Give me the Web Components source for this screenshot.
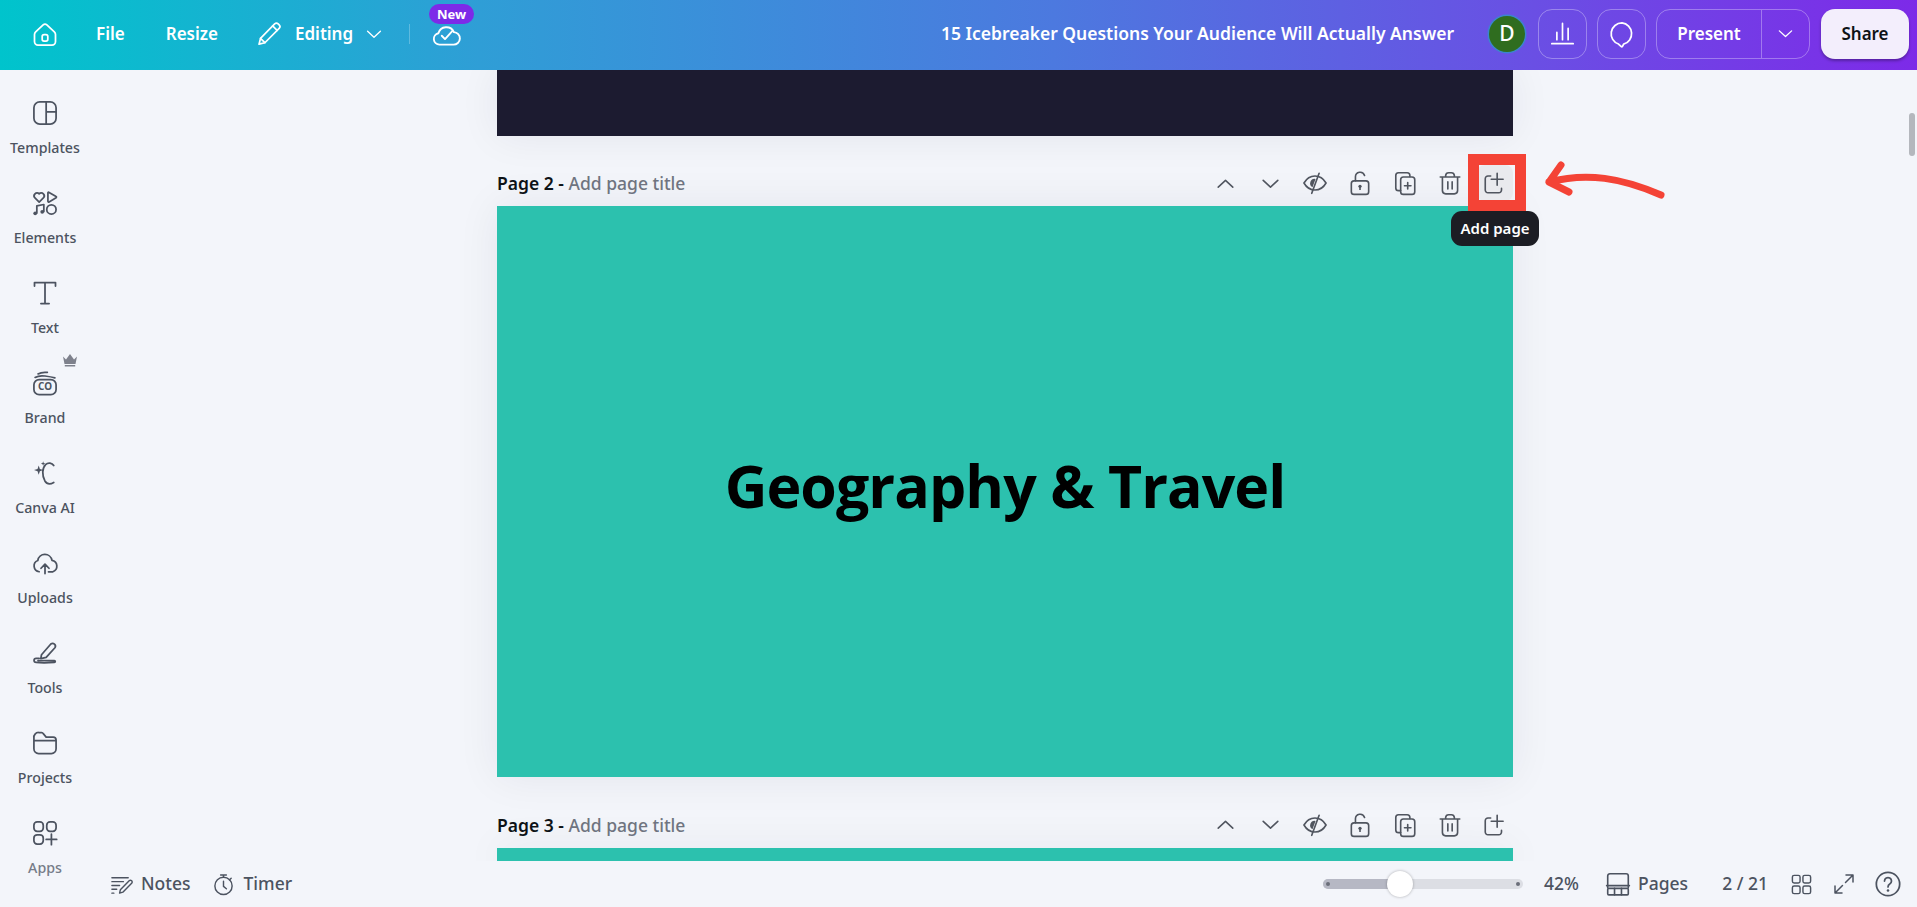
<!DOCTYPE html>
<html lang="en">
<head>
<meta charset="utf-8">
<title>Canva editor</title>
<style>
html,body{margin:0;padding:0;height:100%;overflow:hidden;background:#f3f5fa;font-family:"Noto Sans","Liberation Sans",sans-serif}
</style>
</head>
<body>
<cv-app>
  <cv-header slot="header"></cv-header>
  <cv-sidebar slot="sidebar">
    <cv-side-item icon="templates" label="Templates"></cv-side-item>
    <cv-side-item icon="elements" label="Elements"></cv-side-item>
    <cv-side-item icon="text" label="Text"></cv-side-item>
    <cv-side-item icon="brand" label="Brand" crown></cv-side-item>
    <cv-side-item icon="ai" label="Canva AI"></cv-side-item>
    <cv-side-item icon="uploads" label="Uploads"></cv-side-item>
    <cv-side-item icon="tools" label="Tools"></cv-side-item>
    <cv-side-item icon="projects" label="Projects"></cv-side-item>
    <cv-side-item icon="apps" label="Apps" dim></cv-side-item>
  </cv-sidebar>
  <cv-workspace slot="workspace">
    <cv-slide color="#1c1b30" height="66"></cv-slide>
    <cv-page-bar page="2" hover height="70"></cv-page-bar>
    <cv-slide color="#2cc1ae" height="571"><cv-heading>Geography &amp; Travel</cv-heading></cv-slide>
    <cv-page-bar page="3" height="71"></cv-page-bar>
    <cv-slide color="#2cc1ae" height="20"></cv-slide>
  </cv-workspace>
  <cv-footer slot="footer"></cv-footer>
  <cv-annotation slot="overlay"></cv-annotation>
</cv-app>

<script>
const S='fill="none" stroke="currentColor" stroke-width="1.5" stroke-linecap="round" stroke-linejoin="round"';
const ICONS={
 home:`<path ${S} d="M4 10.2 10.4 4.2a2.4 2.4 0 0 1 3.2 0L20 10.2c.6.6 1 1.4 1 2.2v6.1a3 3 0 0 1-3 3H6a3 3 0 0 1-3-3v-6.1c0-.8.4-1.6 1-2.2Z"/><rect ${S} x="9.6" y="12.6" width="4.8" height="5.6" rx="1.6"/>`,
 pencil:`<path ${S} d="M4 16.4 16.6 3.5a2.2 2.2 0 0 1 3.1 0l.9.9a2.2 2.2 0 0 1 0 3.1L7.9 20.2l-5.2 1.3L4 16.4Z"/><path ${S} d="m14.8 5.3 4 4M4 16.4l3.9 3.8"/>`,
 chevdown:`<path ${S} d="m5 9 7 6.5L19 9"/>`,
 chevup:`<path ${S} d="m5 15.5 7-6.5 7 6.500"/>`,
 cloud:`<path ${S} d="M6.8 20.5a4.6 4.6 0 0 1-.9-9.1 6.6 6.6 0 0 1 12.4-.9 5 5 0 0 1-.4 10H6.8Z"/><path ${S} d="m8.6 13.4 2.6 2.7 5.8-6.4"/>`,
 bars:`<path ${S} d="M2.500 21h19M7 17.500V11M12 17.500V3M17 17.500V7.500"/>`,
 comment:`<path ${S} d="M12 2.500a9.300 9.300 0 0 0-3 18.100l2.400 2.300c.3.300.8.200 1-.2l1-2A9.300 9.300 0 0 0 12 2.500Z"/>`,
 templates:`<rect ${S} x="2.5" y="2.5" width="19" height="19" rx="5"/><path ${S} d="M13 2.5v19M13 11h8.5"/>`,
 elements:`<path ${S} d="M7 11.2 3.4 7.7a2.6 2.6 0 0 1 0-3.6 2.5 2.5 0 0 1 3.6 0 2.5 2.5 0 0 1 3.6 0 2.6 2.6 0 0 1 0 3.6L7 11.2Z"/><path ${S} d="M14.5 3.4v7.2c0 .5.5.8 1 .5l6-3.6c.4-.3.4-.8 0-1l-6-3.6c-.5-.3-1 0-1 .5Z"/><circle ${S} cx="17.5" cy="17.5" r="4"/><path ${S} d="M5 20.5V14.5l6-1.2v6"/><circle cx="3.6" cy="20.8" r="1.6" fill="currentColor"/><circle cx="9.6" cy="19.6" r="1.6" fill="currentColor"/>`,
 text:`<path ${S} d="M3 6V3h18v3M12 3v18M8.5 21h7"/>`,
 brand:`<rect ${S} x="2.5" y="9" width="19" height="13" rx="4.5"/><path ${S} d="M3.5 7.2C6 5.8 9 5.6 12 6c3 .4 6 .9 8.5 1.6M6 4.2c2-1.2 5-1.6 8-1.3"/><text x="12" y="18.4" text-anchor="middle" font-family="Noto Sans,sans-serif" font-size="8.5" font-weight="700" fill="currentColor">CO</text>`,
 ai:`<path ${S} d="M19.5 5.6c-1.4-2.4-4.8-3-7-.8-3 3-3.2 9.4-.6 14 1.6 2.6 4.6 3 7.6 1.3"/><path d="M6.6 5.5l1 3 3 1-3 1-1 3-1-3-3-1 3-1Z" fill="currentColor"/><path d="M10.4 2l.5 1.4 1.4.5-1.4.5-.5 1.4-.5-1.4L8.500 3.900l1.400-.5Z" fill="currentColor"/>`,
 uploads:`<path ${S} d="M7 19.500a5 5 0 0 1-1.200-9.600 6.200 6.200 0 0 1 12.200-.2 5.100 5.100 0 0 1 .8 9.800H15"/><path ${S} d="M12 21V13.500M8.600 16.500 12 13l3.400 3.500"/>`,
 tools:`<path ${S} d="M9 13.500 17 4.300a2.400 2.400 0 0 1 3.500 3.200l-7.500 8.300-4.600 1Z"/><path ${S} d="M7 16.500H4.400a1.800 1.800 0 0 0 0 3.600c5 .6 10 .4 15.600 0a.8.8 0 0 0 0-1.600H6"/>`,
 projects:`<path ${S} d="M2.500 7.500v9.500a4 4 0 0 0 4 4h11a4 4 0 0 0 4-4V9.500a2.500 2.500 0 0 0-2.500-2.500h-6l-2.500-3a2 2 0 0 0-1.500-1H6.500a4 4 0 0 0-4 4.500ZM2.500 10h19"/>`,
 apps:`<rect ${S} x="2.500" y="2.500" width="8" height="8" rx="2.800"/><rect ${S} x="13.500" y="2.500" width="8" height="8" rx="2.800"/><rect ${S} x="2.500" y="13.500" width="8" height="8" rx="2.800"/><path ${S} d="M17.500 13v9M13 17.500h9"/>`,
 eye:`<path ${S} d="M1.800 12C4.200 7.800 7.800 5.500 12 5.500s7.800 2.300 10.200 6.500c-2.400 4.200-6 6.500-10.200 6.500S4.200 16.200 1.800 12Z"/><path ${S} d="M15.800 3 9 21.500"/><path d="M12.500 8.200 9.700 16a4.200 4.200 0 0 1 2.800-7.800Z" fill="currentColor"/>`,
 lock:`<rect ${S} x="4" y="10" width="16" height="12.500" rx="2.500"/><path ${S} d="M7.800 10V6.300a4.300 4.300 0 0 1 8.400-1.200"/><circle cx="12" cy="15" r="1.500" fill="currentColor"/><path stroke="currentColor" stroke-width="1.500" d="M12 15v3.500"/>`,
 copy:`<path ${S} d="M8 19H6a2.500 2.500 0 0 1-2.500-2.500V5A2.500 2.500 0 0 1 6 2.500h8A2.500 2.500 0 0 1 16.500 5v1"/><rect ${S} x="8" y="6.500" width="13" height="16" rx="2.500"/><path ${S} d="M14.500 11.500v6M11.500 14.500h6"/>`,
 trash:`<path ${S} d="M3 6.500h18M8 6.500V5a2.800 2.800 0 0 1 2.800-2.500h2.400A2.800 2.800 0 0 1 16 5v1.500M5 6.500v12.500a3 3 0 0 0 3 3h8a3 3 0 0 0 3-3V6.500M10 11v6.500M14 11v6.500"/>`,
 add:`<path ${S} d="M8 5.500H5.500A2.500 2.500 0 0 0 3 8v10.500A2.500 2.500 0 0 0 5.500 21h10a2.500 2.500 0 0 0 2.500-2.500V17M14 3v11M8.500 8.500h11"/>`,
 notes:`<path ${S} d="M2 5h17M2 9h12M2 13h8M2 17h5M2 21h2"/><path ${S} d="m10 21 .8-3.400L20 8.200a1.800 1.800 0 0 1 2.600 2.600L13.400 20l-3.400 1Z"/>`,
 timer:`<circle ${S} cx="12" cy="13.500" r="9"/><path ${S} d="M9 2h6M12 2v2.500M12 8.500v5.500l3 2.500M20 5.500l-1.800 1.800"/>`,
 pages:`<path ${S} d="M2.500 15.500V4.500a2 2 0 0 1 2-2h15a2 2 0 0 1 2 2v11M1.500 13.500h21"/><rect ${S} x="2.500" y="16" width="19" height="6" rx="1"/><path ${S} d="M8.800 16v6M15.200 16v6"/>`,
 grid:`<rect ${S} x="2.500" y="2.500" width="8" height="8" rx="1.800"/><rect ${S} x="13.500" y="2.500" width="8" height="8" rx="1.800"/><rect ${S} x="2.500" y="13.500" width="8" height="8" rx="1.800"/><rect ${S} x="13.500" y="13.500" width="8" height="8" rx="1.800"/>`,
 expand:`<path ${S} d="M14 3h7v7M21 3l-7.500 7.500M10 21H3v-7M3 21l7.500-7.500"/>`,
 help:`<circle ${S} cx="12" cy="12" r="10"/><path ${S} d="M9 9.500a3 3 0 1 1 4.500 2.600c-1 .6-1.500 1.200-1.500 2.400"/><circle cx="12" cy="17.500" r="1.100" fill="currentColor"/>`
};
function define(name,html,init){
  customElements.define(name,class extends HTMLElement{
    constructor(){super();this.attachShadow({mode:'open'}).innerHTML=typeof html==='function'?html(this):html;}
    connectedCallback(){
      if(this._done)return;this._done=true;
      if(init)init(this,this.shadowRoot);
    }
  });
}
define('cv-icon',`<style>:host{display:inline-flex;flex:none;width:var(--s,24px);height:var(--s,24px);color:inherit}svg{display:block;width:100%;height:100%;overflow:visible}</style><svg viewBox="0 0 24 24"></svg>`,
 (el,r)=>{r.querySelector('svg').innerHTML=ICONS[el.getAttribute('name')]||''});

define('cv-app',`<style>
:host{display:grid;grid-template-columns:90px 1fr;grid-template-rows:70px 1fr 46px;width:1917px;height:907px;position:relative;overflow:hidden;background:#f3f5fa}
::slotted([slot=header]){grid-column:1/3}
::slotted([slot=sidebar]){grid-row:2/4}
</style><slot name="header"></slot><slot name="sidebar"></slot><slot name="workspace"></slot><slot name="footer"></slot><slot name="overlay"></slot>`);

define('cv-header',`<style>
:host{display:flex;align-items:center;height:70px;box-sizing:border-box;background:linear-gradient(90deg,#00c4cc 0%,#2f9ed6 25%,#4c79df 55%,#6a4fe4 80%,#7d2ae8 100%);color:#fff;font:600 17px/1 "Noto Sans",sans-serif;padding:0 8px 3px 31px;position:relative}
.t{white-space:nowrap}
.cloudwrap{position:relative;margin-left:21px;display:flex}
.badge{position:absolute;left:-2px;top:-15px;width:45px;height:20px;border-radius:10px;background:#7d2ae8;font:700 13px/20px "Noto Sans",sans-serif;text-align:center;color:#fff}
.sep{width:1px;height:20px;background:rgba(255,255,255,.25);margin-left:24px}
.right{margin-left:auto;display:flex;align-items:center}
.title{font-weight:600;font-size:17.500px;margin-right:35px}
.av{width:36px;height:36px;border-radius:50%;background:#2f6d1f;box-shadow:0 0 0 1.500px #3b85cf;display:flex;align-items:center;justify-content:center;font:500 21px/1 "Noto Sans",sans-serif;margin-right:13px}
.btn{box-sizing:border-box;height:50px;border:1px solid rgba(255,255,255,.32);border-radius:14px;display:flex;align-items:center;justify-content:center}
.sq{width:49px;margin-right:10px}
.pr{width:154px;margin-right:11px;align-items:stretch}
.pr>span{display:flex;align-items:center;justify-content:center}
.pr .a{width:104px;border-right:1px solid rgba(255,255,255,.32)}
.pr .b{flex:1}
.share{width:88px;height:50px;border-radius:14px;background:#f3eefc;color:#0d1216;display:flex;align-items:center;justify-content:center;box-shadow:0 2px 3px rgba(0,0,0,.3);font-weight:600}
</style>
<cv-icon name="home" style="--s:28px"></cv-icon>
<span class="t" style="margin-left:37px">File</span>
<span class="t" style="margin-left:41px">Resize</span>
<cv-icon name="pencil" style="--s:27px;margin-left:38px"></cv-icon>
<span class="t" style="margin-left:12px">Editing</span>
<cv-icon name="chevdown" style="--s:22px;margin-left:10px"></cv-icon>
<span class="sep"></span>
<span class="cloudwrap"><cv-icon name="cloud" style="--s:30px"></cv-icon><span class="badge">New</span></span>
<div class="right">
 <span class="t title">15 Icebreaker Questions Your Audience Will Actually Answer</span>
 <span class="av">D</span>
 <span class="btn sq"><cv-icon name="bars" style="--s:27px"></cv-icon></span>
 <span class="btn sq"><cv-icon name="comment" style="--s:28px"></cv-icon></span>
 <span class="btn pr"><span class="a">Present</span><span class="b"><cv-icon name="chevdown" style="--s:21px"></cv-icon></span></span>
 <span class="share">Share</span>
</div>`);

define('cv-sidebar',`<style>:host{display:flex;flex-direction:column;width:90px;overflow:hidden;height:837px}</style><slot></slot>`);
define('cv-side-item',el=>`<style>
:host{display:flex;flex:none;flex-direction:column;align-items:center;height:90px;box-sizing:border-box;padding-top:29px;color:#4c5360;position:relative}
.l{font:500 14.200px/18px "Noto Sans",sans-serif;margin-top:12px;white-space:nowrap}
:host([dim]) .l{color:#767c88}
.crown{position:absolute;left:62px;top:13px;color:#7e818c}
</style><cv-icon name="${el.getAttribute('icon')}" style="--s:28px"></cv-icon><span class="l">${el.getAttribute('label')}</span>${el.hasAttribute('crown')?'<svg class="crown" width="16" height="14" viewBox="0 0 16 14"><path fill="currentColor" d="M1 3.500 4 6.500 8 1l4 5.500 3-3-1.500 7.500h-11ZM2.800 12h10.400v1.500H2.800Z"/></svg>':''}`);

define('cv-workspace',`<style>:host{display:block;padding-left:407px;overflow:hidden;height:791px}</style><slot></slot>`);
define('cv-slide',el=>`<style>:host{display:flex;align-items:center;justify-content:center;width:1016px;height:${el.getAttribute('height')}px;background:${el.getAttribute('color')};box-shadow:0 0 40px rgba(30,30,60,.07)}</style><slot></slot>`);
define('cv-heading',`<style>:host{display:block;font:700 59px/1 "Open Sans","Noto Sans",sans-serif;letter-spacing:-.93px;color:#000;white-space:nowrap;padding-bottom:12px}</style><slot></slot>`);
define('cv-page-bar',el=>`<style>
:host{display:flex;align-items:center;width:1016px;height:${el.getAttribute('height')}px;box-sizing:border-box;font:500 17.500px/1 "Noto Sans",sans-serif;color:#0d1216;padding-top:24px}
.lab{margin-top:2px}
.m{color:#6f7480}
.tools{margin-left:auto;display:flex;align-items:center;color:#50555f}
.ic{width:45px;display:flex;align-items:center;justify-content:center}
.h{width:36px;height:36px;margin-left:4.500px;border-radius:8px;display:flex;align-items:center;justify-content:center}
:host([hover]) .h{background:#e9eaee}
</style><span class="lab"><b style="font-weight:600">Page ${el.getAttribute('page')} -</b> <span class="m">Add page title</span></span>
<div class="tools">
 <span class="ic"><cv-icon name="chevup" style="--s:25px"></cv-icon></span>
 <span class="ic"><cv-icon name="chevdown" style="--s:25px"></cv-icon></span>
 <span class="ic"><cv-icon name="eye" style="--s:26px"></cv-icon></span>
 <span class="ic"><cv-icon name="lock" style="--s:26px"></cv-icon></span>
 <span class="ic"><cv-icon name="copy" style="--s:26px"></cv-icon></span>
 <span class="ic"><cv-icon name="trash" style="--s:26px"></cv-icon></span>
 <span class="h"><cv-icon name="add" style="--s:26px"></cv-icon></span>
</div>`);
define('cv-footer',`<style>
:host{display:flex;align-items:center;height:46px;background:#f3f5fa;color:#4c5360;font:500 17.500px/1 "Noto Sans",sans-serif;padding:0 15px 0 20px;box-sizing:border-box;position:relative}
.t{white-space:nowrap}
.slider{position:relative;width:200px;height:10px;border-radius:5px;background:#dcdee4;margin-left:auto}
.fill{width:77px;height:10px;border-radius:5px 0 0 5px;background:#b6b8c4}
.dot{position:absolute;top:3px;width:4px;height:4px;border-radius:50%;background:#6b6f7a}
.thumb{position:absolute;left:64px;top:-8px;width:26px;height:26px;border-radius:50%;background:#fff;box-shadow:0 0 3px rgba(0,0,0,.3)}
</style>
<cv-icon name="notes" style="--s:23px"></cv-icon><span class="t" style="margin-left:8px">Notes</span>
<cv-icon name="timer" style="--s:23px;margin-left:21px"></cv-icon><span class="t" style="margin-left:9px">Timer</span>
<div class="slider"><div class="fill"></div><span class="dot" style="left:3px"></span><span class="dot" style="right:3px"></span><span class="thumb"></span></div>
<span class="t" style="margin-left:21px">42%</span>
<cv-icon name="pages" style="--s:26px;margin-left:26px"></cv-icon><span class="t" style="margin-left:7px">Pages</span>
<span class="t" style="margin-left:34px">2 / 21</span>
<cv-icon name="grid" style="--s:23px;margin-left:22px"></cv-icon>
<cv-icon name="expand" style="--s:24px;margin-left:19px"></cv-icon>
<cv-icon name="help" style="--s:28px;margin-left:18px"></cv-icon>`);
define('cv-annotation',`<style>
:host{display:contents}
.box{position:absolute;left:1468px;top:154px;width:58px;height:57px;box-sizing:border-box;border:11px solid #f44336}
.tip{position:absolute;left:1451px;top:211px;width:88px;height:35px;box-sizing:border-box;border-radius:11px;background:#1c1d24;color:#fff;font:600 15px/35px "Noto Sans",sans-serif;text-align:center;white-space:nowrap}
.arrow{position:absolute;left:1537px;top:150px;width:140px;height:60px;overflow:visible}
.bar{position:absolute;left:1909px;top:113px;width:6px;height:43px;border-radius:3px;background:#b4b7bd}
</style>
<div class="box"></div><div class="tip">Add page</div>
<svg class="arrow" viewBox="0 0 140 60"><path d="M12 32C50 22 85 28 124 45M24 15 12 32 32 42" fill="none" stroke="#f44336" stroke-width="7" stroke-linecap="round" stroke-linejoin="round"/></svg>
<div class="bar"></div>`);
</script>
</body>
</html>
